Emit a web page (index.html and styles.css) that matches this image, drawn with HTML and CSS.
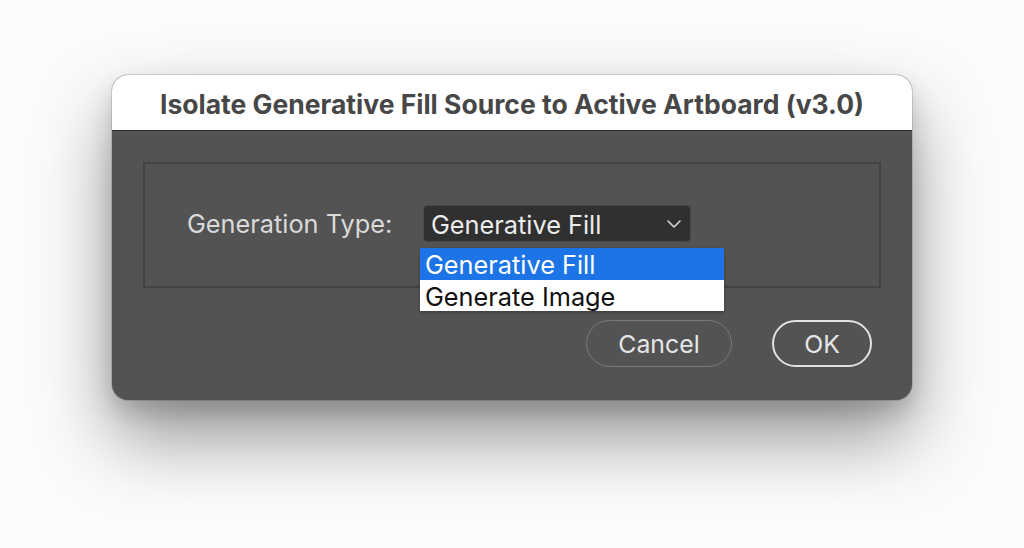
FILE: index.html
```html
<!DOCTYPE html>
<html>
<head>
<meta charset="utf-8">
<link rel="stylesheet" href="styles.css">
</head>
<body>
<div class="window">
  <div class="titlebar">Isolate Generative Fill Source to Active Artboard (v3.0)</div>
  <div class="content">
    <div class="group">
      <span class="label">Generation Type:</span>
      <div class="select">
        <span class="select-text">Generative Fill</span>
        <svg class="chevron" width="14" height="8" viewBox="0 0 14 8"><path d="M1 1 L7 7 L13 1" fill="none" stroke="#d8d8d8" stroke-width="1.6" stroke-linecap="round" stroke-linejoin="round"/></svg>
        <div class="menu">
          <div class="option selected">Generative Fill</div>
          <div class="option">Generate Image</div>
        </div>
      </div>
    </div>
    <div class="buttons">
      <div class="btn cancel">Cancel</div>
      <div class="btn ok">OK</div>
    </div>
  </div>
</div>
</body>
</html>
```
FILE: styles.css
```css
html, body {
  margin: 0;
  height: 100%;
}
body {
  background: #fbfbfb;
  font-family: Inter, "Noto Sans", "Liberation Sans", sans-serif;
  padding: 75px 0 0 112px;
  box-sizing: border-box;
  overflow: hidden;
}
.window {
  width: 800px;
  height: 325px;
  border-radius: 16px;
  overflow: hidden;
  display: flex;
  flex-direction: column;
  box-shadow: 0 0 0 1px rgba(0,0,0,0.12), 0 38px 75px rgba(0,0,0,0.4), 0 12px 24px rgba(0,0,0,0.16);
  background: #535353;
}
.titlebar {
  height: 56px;
  flex: none;
  background: #ffffff;
  border-bottom: 1px solid #2e2e2e;
  box-sizing: border-box;
  display: flex;
  align-items: center;
  justify-content: center;
  font-weight: 700;
  font-size: 26.5px;
  color: #474747;
  padding-top: 2px;
}
.content {
  flex: 1;
  padding: 31px 31px 0 31px;
  display: flex;
  flex-direction: column;
}
.group {
  height: 126px;
  border: 2px solid #434343;
  box-sizing: border-box;
  display: flex;
  align-items: flex-start;
  padding: 41px 0 0 42px;
}
.label {
  color: #dadada;
  font-size: 25.3px;
  margin-top: 3px;
  width: 236px;
}
.select {
  position: relative;
  width: 268px;
  height: 37px;
  box-sizing: border-box;
  background: #303030;
  border: 1px solid #484848;
  border-radius: 4px;
  display: flex;
  align-items: center;
  padding: 0 8px 0 7px;
}
.select-text {
  flex: 1;
  color: #ececec;
  font-size: 25.3px;
  margin-top: 2px;
}
.chevron {
  margin-right: 1px;
  margin-top: 1px;
}
.menu {
  position: absolute;
  left: -4px;
  top: 42px;
  width: 304px;
  background: #ffffff;
  box-shadow: 0 1px 3px rgba(0,0,0,0.3);
}
.option {
  height: 31px;
  line-height: 34px;
  font-size: 25.3px;
  color: #111;
  padding-left: 5px;
}
.option.selected {
  height: 32px;
  background: #1c74e6;
  color: #ffffff;
}
.buttons {
  display: flex;
  justify-content: flex-end;
  gap: 40px;
  padding-right: 9px;
  margin-top: 32px;
}
.btn {
  height: 47px;
  box-sizing: border-box;
  border-radius: 24px;
  display: flex;
  align-items: center;
  justify-content: center;
  font-size: 24.8px;
  color: #e6e6e6;
}
.cancel {
  width: 146px;
  border: 1.5px solid #7a7a7a;
}
.ok {
  width: 100px;
  border: 2px solid #e2e2e2;
}
```
